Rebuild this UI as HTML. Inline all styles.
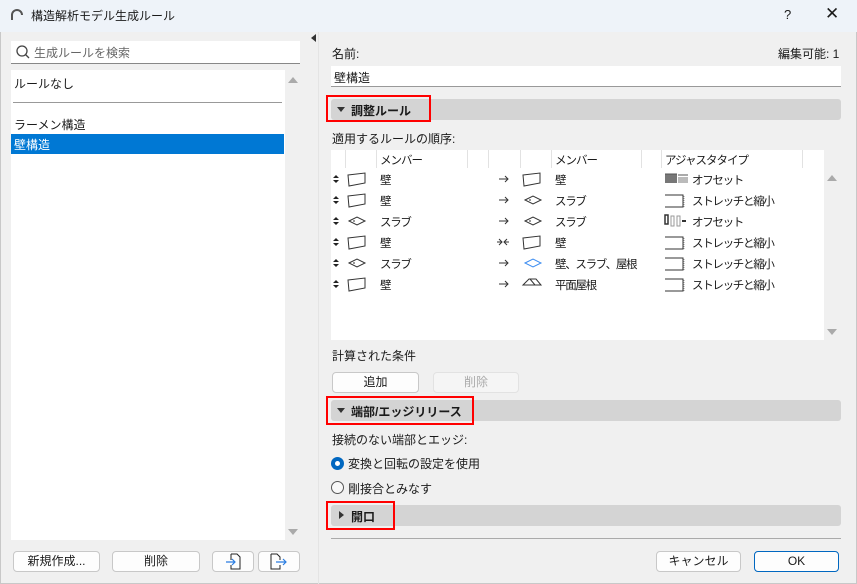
<!DOCTYPE html>
<html><head><meta charset="utf-8"><style>
*{box-sizing:border-box;margin:0;padding:0}
body{width:857px;height:584px;overflow:hidden;background:#f0f0f0;font-family:"Liberation Sans","Noto Sans CJK JP",sans-serif;font-size:12px;color:#1a1a1a;position:relative}
.a{position:absolute;white-space:nowrap}
.btn{position:absolute;background:#fdfdfd;border:1px solid #c8c8c8;border-radius:4px;text-align:center;line-height:19px;font-size:12px}
.sec{position:absolute;left:331px;width:510px;height:21px;background:#d4d4d4;border-radius:3px}
.red{position:absolute;border:2px solid #ff0000}
.st{position:absolute;font-weight:bold;font-size:12px}
.tri{position:absolute;width:0;height:0}
.sep{position:absolute;top:150px;width:1px;height:18px;background:#e2e2e2}
</style></head><body>
<div class="a" style="left:0;top:0;width:857px;height:32px;background:#eef3f9"></div>
<svg class="a" style="left:10px;top:8px" width="14" height="14"><path d="M2 12 V7 A5 5 0 0 1 12 7" stroke="#555" stroke-width="2" fill="none"/></svg>
<div class="a" style="left:31px;top:7px;font-size:12px">構造解析モデル生成ルール</div>
<div class="a" style="left:784px;top:7px;font-size:13px">?</div>
<div class="a" style="left:825px;top:4px;font-size:17px">✕</div>
<div class="a" style="left:0;top:32px;width:857px;height:552px;border:1px solid #c8c8c8;border-top:none"></div>
<div class="tri" style="left:311px;top:34px;border-right:5px solid #333;border-top:4px solid transparent;border-bottom:4px solid transparent"></div>
<div class="a" style="left:318px;top:32px;width:1px;height:552px;background:#e4e4e4"></div>
<!-- left -->
<div class="a" style="left:11px;top:41px;width:289px;height:23px;background:#fff;border-bottom:1px solid #888"></div>
<svg class="a" style="left:15px;top:44px" width="16" height="16"><circle cx="7" cy="7" r="5" stroke="#444" stroke-width="1.3" fill="none"/><path d="M10.5 10.5 L14 14" stroke="#444" stroke-width="1.3"/></svg>
<div class="a" style="left:34px;top:44px;color:#666">生成ルールを検索</div>
<div class="a" style="left:11px;top:70px;width:274px;height:470px;background:#fff"></div>
<div class="tri" style="left:288px;top:77px;border-bottom:6px solid #aaa;border-left:5px solid transparent;border-right:5px solid transparent"></div>
<div class="tri" style="left:288px;top:529px;border-top:6px solid #aaa;border-left:5px solid transparent;border-right:5px solid transparent"></div>
<div class="a" style="left:14px;top:75px">ルールなし</div>
<div class="a" style="left:13px;top:102px;width:269px;height:1px;background:#999"></div>
<div class="a" style="left:14px;top:116px">ラーメン構造</div>
<div class="a" style="left:11px;top:134px;width:273px;height:20px;background:#0078d4"></div>
<div class="a" style="left:14px;top:136px;color:#fff">壁構造</div>
<div class="btn" style="left:13px;top:551px;width:87px;height:21px">新規作成...</div>
<div class="btn" style="left:112px;top:551px;width:88px;height:21px">削除</div>
<div class="btn" style="left:212px;top:551px;width:42px;height:21px"></div>
<div class="btn" style="left:258px;top:551px;width:42px;height:21px"></div>
<svg class="a" style="left:224px;top:553px" width="20" height="18"><path d="M7 1 H13 L16 4 V16 H7 V12 M7 7 V1" stroke="#222" fill="none"/><path d="M2 9 H11 M8 6 L11 9 L8 12" stroke="#2a7de1" fill="none" stroke-width="1.2"/></svg>
<svg class="a" style="left:268px;top:553px" width="22" height="18"><path d="M3 1 H9 L12 4 V7 M12 12 V16 H3 V1" stroke="#222" fill="none"/><path d="M8 9 H18 M15 6 L18 9 L15 12" stroke="#2a7de1" fill="none" stroke-width="1.2"/></svg>
<!-- right -->
<div class="a" style="left:332px;top:45px">名前:</div>
<div class="a" style="left:778px;top:45px">編集可能: 1</div>
<div class="a" style="left:331px;top:66px;width:510px;height:21px;background:#fff;border-bottom:1px solid #999"></div>
<div class="a" style="left:334px;top:69px">壁構造</div>
<div class="sec" style="top:99px"></div>
<div class="tri" style="left:337px;top:107px;border-top:5px solid #333;border-left:4px solid transparent;border-right:4px solid transparent"></div>
<div class="st" style="left:351px;top:102px">調整ルール</div>
<div class="red" style="left:326px;top:95px;width:105px;height:27px"></div>
<div class="a" style="left:332px;top:130px">適用するルールの順序:</div>
<div class="a" style="left:331px;top:150px;width:493px;height:190px;background:#fff"></div>
<div class="a" style="left:824px;top:150px;width:17px;height:190px;background:#f0f0f0"></div>
<div class="tri" style="left:827px;top:175px;border-bottom:6px solid #aaa;border-left:5px solid transparent;border-right:5px solid transparent"></div>
<div class="tri" style="left:827px;top:329px;border-top:6px solid #aaa;border-left:5px solid transparent;border-right:5px solid transparent"></div>
<div class="sep" style="left:345px"></div><div class="sep" style="left:376px"></div><div class="sep" style="left:467px"></div><div class="sep" style="left:488px"></div><div class="sep" style="left:520px"></div><div class="sep" style="left:551px"></div><div class="sep" style="left:641px"></div><div class="sep" style="left:661px"></div><div class="sep" style="left:802px"></div>
<div class="a" style="left:380px;top:152px;font-size:11.5px;letter-spacing:-1px">メンバー</div>
<div class="a" style="left:555px;top:152px;font-size:11.5px;letter-spacing:-1px">メンバー</div>
<div class="a" style="left:665px;top:152px;font-size:11.5px;letter-spacing:-1px">アジャスタタイプ</div>
<svg class="a" style="left:331px;top:168px" width="490" height="126" font-family="Liberation Sans,Noto Sans CJK JP,sans-serif" font-size="11.5" letter-spacing="-1.3" fill="#1a1a1a">
<defs>
<g id="ud"><path d="M0 -1 L3 -4 L6 -1 Z M0 1 L3 4 L6 1 Z" fill="#222"/></g>
<g id="wall"><path d="M0 2 L17 0 L17 10 L1 13 Z" fill="#fff" stroke="#333"/></g>
<g id="slab"><path d="M0 5 L8 1 L16 5 L8 9 Z" fill="#fff" stroke="#333"/><path d="M5 4 V6" stroke="#333"/></g>
<g id="str"><path d="M0 4 H18 V16 H0" fill="none" stroke="#333"/><path d="M19 5 V16" stroke="#999" stroke-dasharray="1 1"/></g>
<g id="arr"><path d="M0 0 H9 M6 -3 L9 0 L6 3" stroke="#333" fill="none"/></g>
</defs>
<use href="#ud" x="2" y="11"/><use href="#ud" x="2" y="32"/><use href="#ud" x="2" y="53"/><use href="#ud" x="2" y="74"/><use href="#ud" x="2" y="95"/><use href="#ud" x="2" y="116"/>
<use href="#wall" x="17" y="5"/><use href="#wall" x="17" y="26"/><use href="#slab" x="18" y="48"/><use href="#wall" x="17" y="68"/><use href="#slab" x="18" y="90"/><use href="#wall" x="17" y="110"/>
<text x="49" y="16">壁</text><text x="49" y="37">壁</text><text x="49" y="58">スラブ</text><text x="49" y="79">壁</text><text x="49" y="100">スラブ</text><text x="49" y="121">壁</text>
<use href="#arr" x="168" y="11"/><use href="#arr" x="168" y="32"/><use href="#arr" x="168" y="53"/><use href="#arr" x="168" y="116"/><use href="#arr" x="168" y="95"/>
<path d="M166 74 H171 M168 71 L171 74 L168 77 M178 74 H173 M176 71 L173 74 L176 77" stroke="#333" fill="none"/>
<use href="#wall" x="192" y="5"/><use href="#slab" x="194" y="27"/><use href="#slab" x="194" y="48"/><use href="#wall" x="192" y="68"/>
<path d="M194 95 L202 91 L210 95 L202 99 Z" fill="#fff" stroke="#3c8cf0"/>
<path d="M192 117 L198 111 H205 L210 117 Z M199 111 L204 117" fill="#fff" stroke="#333"/>
<text x="224" y="16">壁</text><text x="224" y="37">スラブ</text><text x="224" y="58">スラブ</text><text x="224" y="79">壁</text><text x="224" y="100">壁、スラブ、屋根</text><text x="224" y="121">平面屋根</text>
<rect x="334" y="6" width="12" height="9" fill="#777"/><rect x="347" y="9" width="10" height="6" fill="#bbb"/><path d="M334 6 H346 M347 7 H357" stroke="#555"/>
<use href="#str" x="334" y="23"/><use href="#str" x="334" y="65"/><use href="#str" x="334" y="86"/><use href="#str" x="334" y="107"/>
<rect x="334" y="47" width="3" height="9" fill="none" stroke="#333" stroke-width="1.5"/><rect x="340" y="48" width="3" height="10" fill="none" stroke="#999"/><rect x="346" y="48" width="3" height="10" fill="none" stroke="#999"/><path d="M351 53 H355" stroke="#333" stroke-width="2"/>
<text x="361" y="16">オフセット</text><text x="361" y="37">ストレッチと縮小</text><text x="361" y="58">オフセット</text><text x="361" y="79">ストレッチと縮小</text><text x="361" y="100">ストレッチと縮小</text><text x="361" y="121">ストレッチと縮小</text>
</svg>
<div class="a" style="left:332px;top:347px">計算された条件</div>
<div class="btn" style="left:332px;top:372px;width:87px;height:21px">追加</div>
<div class="btn" style="left:433px;top:372px;width:86px;height:21px;background:#f5f5f5;border-color:#e2e2e2;color:#aaa">削除</div>
<div class="sec" style="top:400px"></div>
<div class="tri" style="left:337px;top:408px;border-top:5px solid #333;border-left:4px solid transparent;border-right:4px solid transparent"></div>
<div class="st" style="left:351px;top:403px">端部/エッジリリース</div>
<div class="red" style="left:326px;top:396px;width:148px;height:29px"></div>
<div class="a" style="left:332px;top:431px">接続のない端部とエッジ:</div>
<div class="a" style="left:331px;top:457px;width:13px;height:13px;border-radius:50%;background:#0067c0"></div>
<div class="a" style="left:335px;top:461px;width:5px;height:5px;border-radius:50%;background:#fff"></div>
<div class="a" style="left:348px;top:455px">変換と回転の設定を使用</div>
<div class="a" style="left:331px;top:481px;width:13px;height:13px;border-radius:50%;border:1px solid #555;background:#f8f8f8"></div>
<div class="a" style="left:348px;top:480px">剛接合とみなす</div>
<div class="sec" style="top:505px"></div>
<div class="tri" style="left:339px;top:511px;border-left:5px solid #333;border-top:4px solid transparent;border-bottom:4px solid transparent"></div>
<div class="st" style="left:351px;top:508px">開口</div>
<div class="red" style="left:326px;top:501px;width:69px;height:29px"></div>
<div class="a" style="left:331px;top:538px;width:510px;height:1px;background:#aaa"></div>
<div class="btn" style="left:656px;top:551px;width:85px;height:21px">キャンセル</div>
<div class="btn" style="left:754px;top:551px;width:85px;height:21px;border-color:#0067c0">OK</div>
</body></html>
